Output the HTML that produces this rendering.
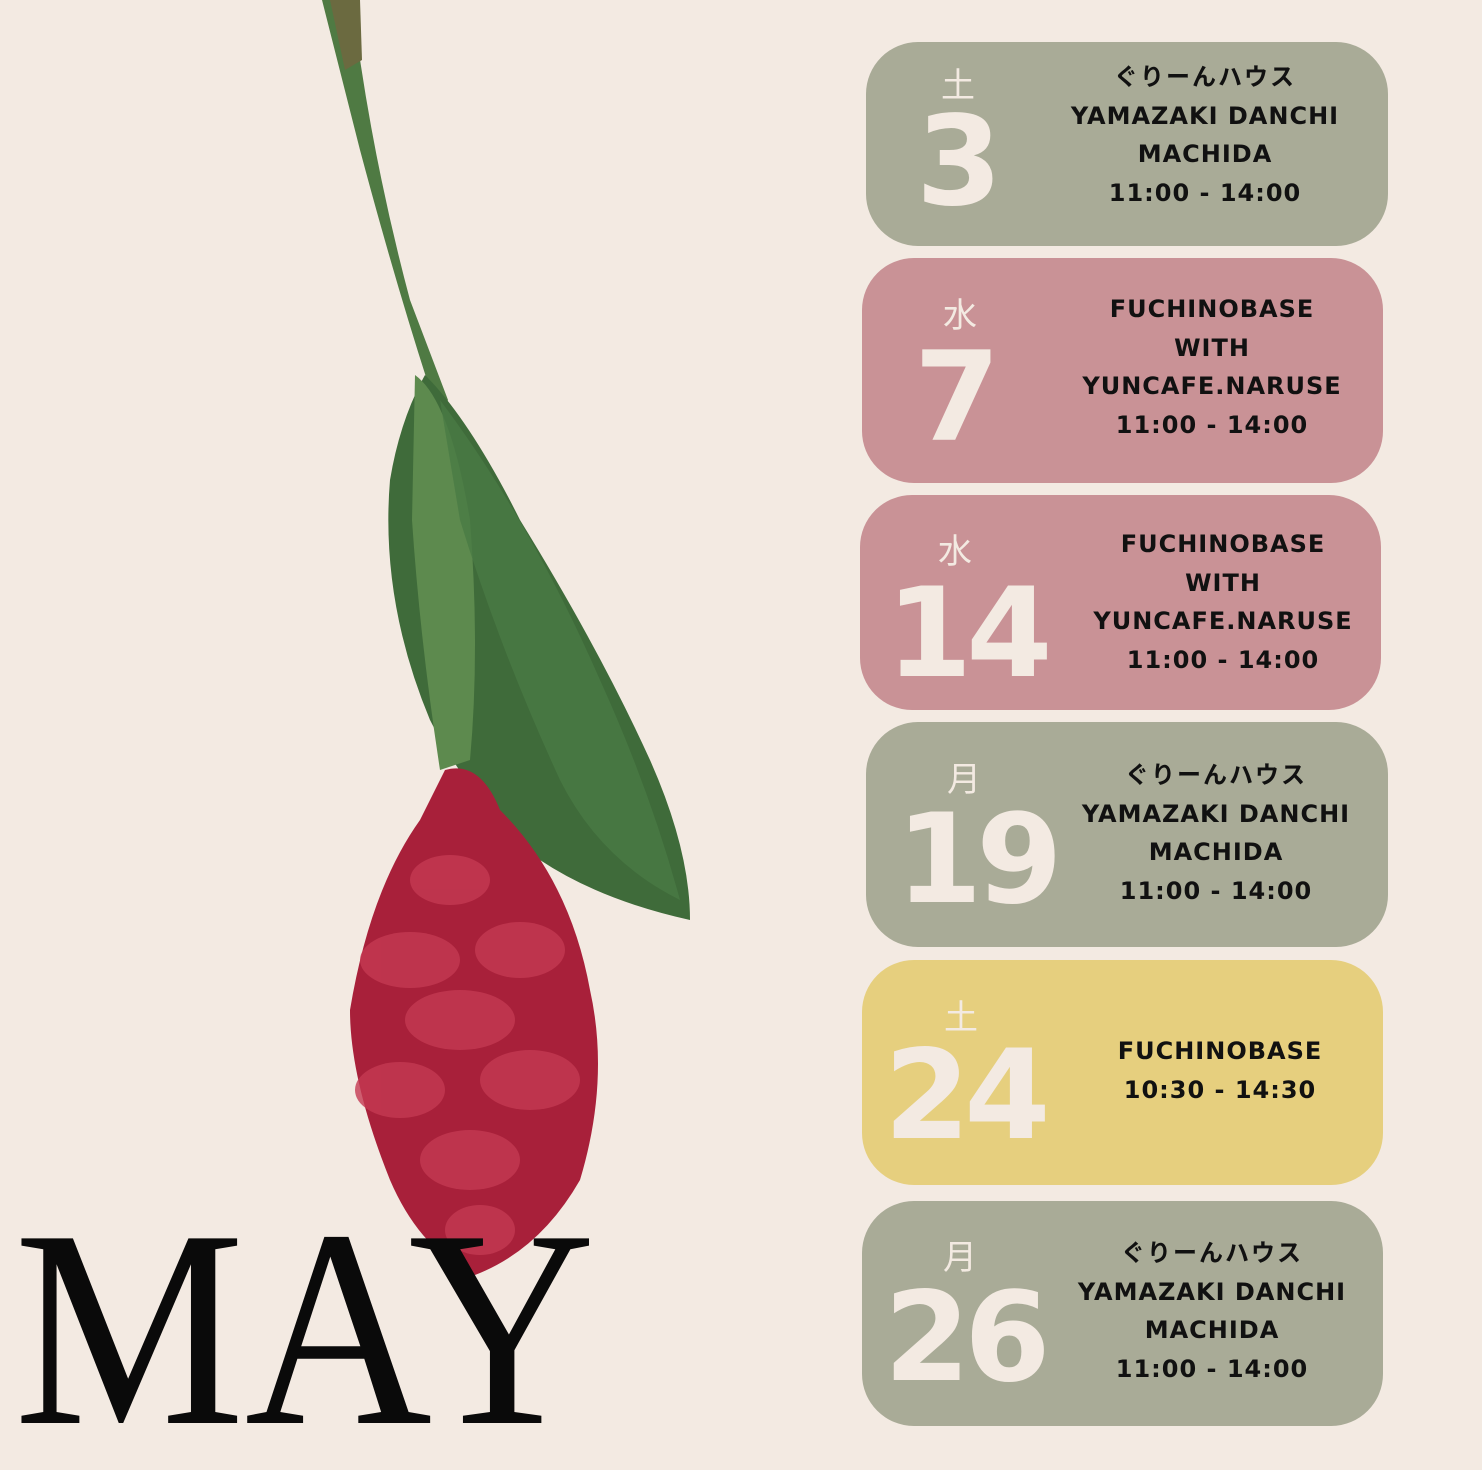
<!DOCTYPE html>
<html style="overflow:hidden;height:1470px"><head><meta charset="utf-8"><style>
body{margin:0;width:1482px;height:1470px;background:#f3eae2;position:relative;overflow:hidden;font-family:"DejaVu Sans","Noto Sans CJK JP",sans-serif}
.c{position:absolute;border-radius:52px}
.g{background:#a9ab97}.p{background:#c99296}.y{background:#e6cf7e}
.d{position:absolute;color:#f3eae2;font-size:34px;text-align:center;width:100px}
.n{position:absolute;color:#f3eae2;font-weight:bold;font-size:124px;line-height:1;letter-spacing:-6px}
.t{position:absolute;font-weight:bold;font-size:24px;line-height:38.5px;text-align:center;color:#111;letter-spacing:1px;white-space:nowrap}
.t .j{font-weight:bold;letter-spacing:2px;color:#111}
.may{position:absolute;left:14px;top:1187px;height:260px;overflow:hidden;font-family:"Liberation Serif",serif;font-size:282px;color:#0a0a0a;letter-spacing:0;line-height:1;transform:scaleX(0.92);transform-origin:0 0}
</style></head><body>
<svg style="position:absolute;left:0;top:0" width="800" height="1300">
<path d="M322 0 L352 0 Q370 150 410 300 L448 400 L440 420 Q400 300 360 150 Z" fill="#4f7a43"/>
<path d="M330 0 L360 0 L362 60 L345 70 Z" fill="#6b6a40"/>
<path d="M425 375 Q470 420 520 520 Q600 650 650 760 Q690 850 690 920 Q600 900 540 860 Q470 800 430 720 Q380 600 390 480 Q400 420 425 375 Z" fill="#3f6b3a"/>
<path d="M415 375 Q450 400 470 520 Q480 650 470 760 L440 770 Q420 640 412 520 Z" fill="#5d8a4e"/>
<path d="M440 400 Q530 520 600 680 Q650 790 680 900 Q600 860 560 780 Q500 650 460 520 Z" fill="#4a7a45" opacity=".8"/>
<path d="M445 770 Q480 760 500 810 Q570 880 590 990 Q610 1080 580 1180 Q540 1250 475 1275 Q420 1250 390 1180 Q350 1080 350 1010 Q370 890 420 820 Z" fill="#a8203a"/>
<g fill="#c43a52" opacity=".8">
<ellipse cx="450" cy="880" rx="40" ry="25"/><ellipse cx="410" cy="960" rx="50" ry="28"/><ellipse cx="520" cy="950" rx="45" ry="28"/>
<ellipse cx="460" cy="1020" rx="55" ry="30"/><ellipse cx="400" cy="1090" rx="45" ry="28"/><ellipse cx="530" cy="1080" rx="50" ry="30"/>
<ellipse cx="470" cy="1160" rx="50" ry="30"/><ellipse cx="480" cy="1230" rx="35" ry="25"/>
</g>
</svg>
<div class="may">MAY</div>

<div class="c g" style="left:866px;top:42px;width:522px;height:204px"></div>
<div class="d" style="left:908px;top:58px">土</div>
<div class="n" style="left:916px;top:100px">3</div>
<div class="t" style="left:1205px;top:58px;transform:translateX(-50%)"><span class="j">ぐりーんハウス</span><br>YAMAZAKI DANCHI<br>MACHIDA<br>11:00 - 14:00</div>

<div class="c p" style="left:862px;top:258px;width:521px;height:225px"></div>
<div class="d" style="left:910px;top:288px">水</div>
<div class="n" style="left:914px;top:336px">7</div>
<div class="t" style="left:1212px;top:290px;transform:translateX(-50%)">FUCHINOBASE<br>WITH<br>YUNCAFE.NARUSE<br>11:00 - 14:00</div>

<div class="c p" style="left:860px;top:495px;width:521px;height:215px"></div>
<div class="d" style="left:905px;top:524px">水</div>
<div class="n" style="left:886px;top:572px">14</div>
<div class="t" style="left:1223px;top:525px;transform:translateX(-50%)">FUCHINOBASE<br>WITH<br>YUNCAFE.NARUSE<br>11:00 - 14:00</div>

<div class="c g" style="left:866px;top:722px;width:522px;height:225px"></div>
<div class="d" style="left:914px;top:752px">月</div>
<div class="n" style="left:896px;top:798px">19</div>
<div class="t" style="left:1216px;top:756px;transform:translateX(-50%)"><span class="j">ぐりーんハウス</span><br>YAMAZAKI DANCHI<br>MACHIDA<br>11:00 - 14:00</div>

<div class="c y" style="left:862px;top:960px;width:521px;height:225px"></div>
<div class="d" style="left:911px;top:990px">土</div>
<div class="n" style="left:884px;top:1034px">24</div>
<div class="t" style="left:1220px;top:1032px;transform:translateX(-50%)">FUCHINOBASE<br>10:30 - 14:30</div>

<div class="c g" style="left:862px;top:1201px;width:521px;height:225px"></div>
<div class="d" style="left:910px;top:1230px">月</div>
<div class="n" style="left:884px;top:1276px">26</div>
<div class="t" style="left:1212px;top:1234px;transform:translateX(-50%)"><span class="j">ぐりーんハウス</span><br>YAMAZAKI DANCHI<br>MACHIDA<br>11:00 - 14:00</div>
</body></html>
